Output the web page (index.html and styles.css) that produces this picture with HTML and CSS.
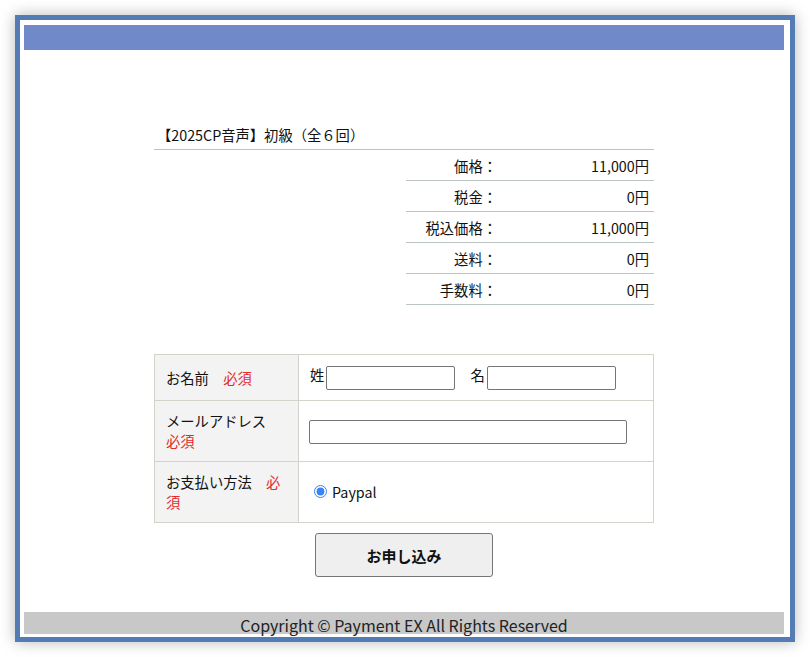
FILE: index.html
```html
<!DOCTYPE html>
<html lang="ja">
<head>
  <meta charset="UTF-8" />
  <meta name="viewport" content="width=device-width, initial-scale=1.0">
  <title>お申し込み</title>

  <link rel="stylesheet" href="styles.css">
</head>

<body>

  <div class="frame">
    <div class="header"></div>

    <div class="main">
      <div class="item-title">【2025CP音声】初級（全６回）</div>

      <table class="price-table">
        <tr><th>価格：</th><td>11,000円</td></tr>
        <tr><th>税金：</th><td>0円</td></tr>
        <tr><th>税込価格：</th><td>11,000円</td></tr>
        <tr><th>送料：</th><td>0円</td></tr>
        <tr><th>手数料：</th><td>0円</td></tr>
      </table>

      <form class="order-form">
        <table class="form-table">
          <tr class="row-name">
            <th>お名前　<span class="required">必須</span></th>
            <td>
              姓<input type="text" class="name-input">
              <span class="mei">名</span><input type="text" class="name-input">
            </td>
          </tr>
          <tr class="row-tall">
            <th>メールアドレス　<span class="required">必須</span></th>
            <td><input type="text" class="mail-input"></td>
          </tr>
          <tr class="row-tall">
            <th>お支払い方法　<span class="required">必須</span></th>
            <td>
              <label class="pay-option"><input type="radio" name="pay" checked> Paypal</label>
            </td>
          </tr>
        </table>

        <div class="submit-row">
          <button type="button" class="submit-btn">お申し込み</button>
        </div>
      </form>
    </div>

    <div class="footer">Copyright © Payment EX All Rights Reserved</div>
  </div>

</body>
</html>
```

FILE: styles.css
```css
body {
  margin: 0;
  padding: 0;
  background-color: white;
  font-family: "Noto Sans CJK JP", "Noto Sans", sans-serif;
  font-size: 14.3px;
  color: #111;
}

.frame {
  margin: 15px;
  height: 627px;
  box-sizing: border-box;
  border: 5px solid #547cb4;
  padding: 5px 6px 3px 4px;
  box-shadow: 0 0 14px rgba(0, 0, 0, 0.28);
  display: flex;
  flex-direction: column;
}

.header {
  height: 25px;
  background-color: #7089c9;
}

.main {
  flex: 1;
  width: 500px;
  margin: 0 auto;
  padding-top: 75px;
}

.item-title {
  padding: 0 3px;
  line-height: 20px;
  height: 24px;
  border-bottom: 1px solid #bcc4c4;
}

.price-table {
  width: 248px;
  margin-left: auto;
  border-collapse: collapse;
}

.price-table th,
.price-table td {
  height: 30px;
  padding: 0;
  font-weight: normal;
  text-align: right;
  border-bottom: 1px solid #bcc4c4;
}

.price-table th {
  width: 91px;
}

.price-table td {
  padding-right: 5px;
}

.order-form {
  margin-top: 49px;
}

.form-table {
  width: 500px;
  border-collapse: collapse;
}

.form-table th,
.form-table td {
  border: 1px solid #d3d3cb;
  padding: 0 11px;
  line-height: 20px;
  text-align: left;
  font-weight: normal;
}

.form-table th {
  width: 121px;
  background-color: #f3f3f3;
}

.row-name th,
.row-name td {
  height: 45px;
}

.row-tall th,
.row-tall td {
  height: 60px;
}

.required {
  color: #e22b2b;
}

.name-input {
  width: 129px;
  height: 24px;
  box-sizing: border-box;
  margin: 0 0 0 2px;
  vertical-align: middle;
  border: 1px solid #767676;
  border-radius: 2px;
}

.mei {
  margin-left: 12px;
}

.mail-input {
  width: 318px;
  height: 24px;
  box-sizing: border-box;
  margin: 2px 0 0 -1px;
  vertical-align: middle;
  border: 1px solid #767676;
  border-radius: 2px;
}

.pay-option {
  display: inline-flex;
  align-items: center;
  gap: 5px;
}

.pay-option input {
  margin: 0 0 0 4px;
  accent-color: #3b82f6;
}

.submit-row {
  text-align: center;
  margin-top: 10px;
}

.submit-btn {
  width: 178px;
  height: 44px;
  font-family: "Noto Sans CJK JP", sans-serif;
  font-size: 15px;
  font-weight: bold;
  color: #111;
  background-color: #efefef;
  border: 1px solid #767676;
  border-radius: 3px;
}

.footer {
  height: 22px;
  line-height: 27px;
  background-color: #c8c8c8;
  text-align: center;
  font-size: 16px;
  color: #222;
  white-space: nowrap;
}
```
